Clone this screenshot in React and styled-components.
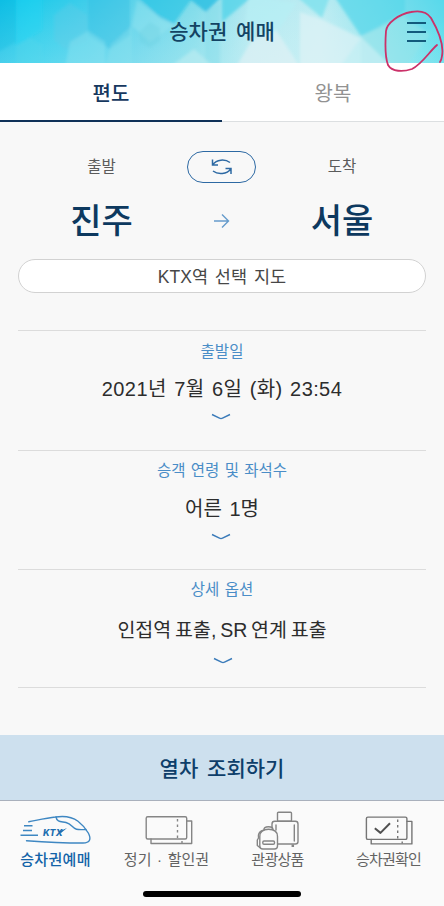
import React from "react";
import styled, { createGlobalStyle } from "styled-components";

const Global = createGlobalStyle`
  * { box-sizing: border-box; }
  body { margin: 0; background: #f8f8f8; }
  button { font: inherit; background: none; border: 0; padding: 0; margin: 0; }
`;

const Screen = styled.div`
  position: relative;
  display: flex;
  flex-direction: column;
  width: 444px;
  height: 906px;
  overflow: hidden;
  background: #f8f8f8;
  font-family: "Liberation Sans", "Noto Sans CJK KR", sans-serif;
`;

const Text = styled.span`
  display: block;
  white-space: nowrap;
  font-size: ${(p) => p.$size}px;
  line-height: ${(p) => p.$line}px;
  font-weight: ${(p) => p.$weight || 400};
  color: ${(p) => p.$color};
  letter-spacing: ${(p) => p.$track || 0}px;
  word-spacing: ${(p) => p.$gap || 0}px;
`;

const Header = styled.header`
  position: relative;
  display: grid;
  grid-template-columns: 60px 1fr 60px;
  align-items: center;
  justify-items: center;
  height: 63px;
`;

const HeaderArt = styled.svg`
  position: absolute;
  inset: 0;
`;

const HeaderTitle = styled.h1`
  position: relative;
  grid-column: 2;
  margin: 0;
`;

const MenuButton = styled.button`
  position: relative;
  grid-column: 3;
  display: flex;
  flex-direction: column;
  gap: 7px;
  margin: 1px 0 0 5px;
`;

const MenuBar = styled.span`
  width: 19px;
  height: 2px;
  background: #125a7c;
`;

const Tabs = styled.nav`
  display: grid;
  grid-template-columns: 1fr 1fr;
  height: 59px;
  background: #fff;
`;

const Tab = styled.button`
  display: flex;
  justify-content: center;
  padding-top: 16px;
  border-bottom: ${(p) => (p.$active ? "2px solid #0f3158" : "1px solid #dcdfe1")};
`;

const Main = styled.main`
  display: flex;
  flex-direction: column;
  height: 613px;
  padding: 28px 18px 0;
`;

const Route = styled.section`
  display: grid;
  grid-template-columns: 167px 1fr 168px;
  grid-template-rows: 33px 76px;
  justify-items: center;
  align-items: center;
`;

const SwapButton = styled.button`
  display: flex;
  align-items: center;
  justify-content: center;
  width: 69px;
  height: 32px;
  border: 1.5px solid #2d69a3;
  border-radius: 16px;
`;

const MapButton = styled.button`
  display: flex;
  align-items: center;
  justify-content: center;
  height: 34px;
  padding-top: 1px;
  background: #fff;
  border: 1px solid #d2d2d2;
  border-radius: 17px;
`;

const Options = styled.section`
  margin-top: 37px;
  border-bottom: 1px solid #dcdcdc;
`;

const Option = styled.div`
  display: flex;
  flex-direction: column;
  align-items: center;
  height: ${(p) => p.$height}px;
  padding-top: ${(p) => p.$top}px;
  border-top: 1px solid #dcdcdc;
`;

const OptionValue = styled.div`
  margin-top: ${(p) => p.$top}px;
`;

const Chevron = styled.svg`
  margin-top: ${(p) => p.$top}px;
  margin-left: ${(p) => p.$shift || 0}px;
`;

const SearchButton = styled.button`
  display: flex;
  align-items: center;
  justify-content: center;
  height: 66px;
  padding-top: 2px;
  background: #cde0ee;
  border-bottom: 1px solid #a9b0bc;
`;

const BottomNav = styled.nav`
  display: grid;
  grid-template-columns: repeat(4, 111px);
  height: 105px;
  background: #fafafa;
`;

const NavItem = styled.div`
  display: flex;
  flex-direction: column;
  align-items: center;
  padding-top: 7px;
`;

const HomeIndicator = styled.div`
  position: absolute;
  left: 143px;
  bottom: 9px;
  width: 158px;
  height: 6px;
  border-radius: 3px;
  background: #000;
`;

const Scribble = styled.svg`
  position: absolute;
  top: 0;
  right: 0;
  pointer-events: none;
`;

const NavIcon = ({ color, children }) => (
  <svg width="76" height="42" viewBox="0 0 76 42" fill="none" stroke={color} strokeWidth="1.4" strokeLinecap="round" strokeLinejoin="round">
    {children}
  </svg>
);

const Down = (props) => (
  <Chevron width="20" height="8" viewBox="0 0 20 8" fill="none" stroke="#3c7cba" strokeWidth="1.4" {...props}>
    <path d="M1 1.5 L8.5 5.2 Q10 6 11.5 5.2 L19 1.5" />
  </Chevron>
);

const Facets = () => (
  <HeaderArt width="444" height="63" viewBox="0 0 444 63" preserveAspectRatio="none">
    <defs>
      <linearGradient id="sky" x1="0" x2="1" y1="0" y2="0">
        <stop offset="0" stopColor="#12c0e6" />
        <stop offset=".07" stopColor="#1fcbea" />
        <stop offset=".2" stopColor="#3fcdea" />
        <stop offset=".32" stopColor="#62d4ea" />
        <stop offset=".44" stopColor="#80dcea" />
        <stop offset=".56" stopColor="#b0e8f0" />
        <stop offset=".72" stopColor="#bdecf2" />
        <stop offset=".86" stopColor="#8fe3ed" />
        <stop offset="1" stopColor="#4cdaea" />
      </linearGradient>
      <linearGradient id="haze" x1="0" x2="0" y1="0" y2="1">
        <stop offset="0" stopColor="#fff" stopOpacity="0" />
        <stop offset="1" stopColor="#e6fafa" stopOpacity=".25" />
      </linearGradient>
      <filter id="soft"><feGaussianBlur stdDeviation="1.6" /></filter>
    </defs>
    <rect width="444" height="63" fill="url(#sky)" />
    <rect width="444" height="63" fill="url(#haze)" />
    <g filter="url(#soft)">
      <path d="M-4 -4H16V42L-4 53Z" fill="#10b6df" opacity=".25" />
      <path d="M16 -4H42V30L16 46Z" fill="#1bd8f5" opacity=".35" />
      <path d="M16 46L30 38L42 45V67H16Z" fill="#54d6ec" opacity=".35" />
      <path d="M54 15L70 3L87 15V40L66 50L54 40Z" fill="#60cce5" opacity=".35" />
      <path d="M88 -4H130V35L110 49L88 35Z" fill="#34bee3" opacity=".45" />
      <path d="M88 31L70 42L65 67H105V42Z" fill="#8be2ef" opacity=".45" />
      <path d="M111 45L132 26V67H105Z" fill="#87e0ee" opacity=".45" />
      <path d="M137 -4H194L174 24L160 18Z" fill="#16bfe3" opacity=".55" />
      <path d="M137 0L155 14L174 25L150 42L132 26Z" fill="#9ae5f0" opacity=".4" />
      <path d="M139 32L150 22L160 28V41L150 48L140 42Z" fill="#68ccdf" opacity=".3" />
      <path d="M186 -4H222L206 12Z" fill="#20bce1" opacity=".75" />
      <path d="M205 12L220 3V67H205Z" fill="#82dbe9" opacity=".4" />
      <path d="M194 49L214 67H170Z" fill="#b9ebf1" opacity=".7" />
      <path d="M222 -4H253L222 22Z" fill="#48d1e8" opacity=".7" />
      <path d="M249 -4L297 3L270 42L245 25Z" fill="#b7eff5" opacity=".7" />
      <path d="M236 67L252 40L276 30L300 67Z" fill="#e4f2f5" opacity=".6" />
      <path d="M296 -4H330L322 18Z" fill="#74dfed" opacity=".7" />
      <path d="M300 12L323 20L361 38L340 67H300Z" fill="#e0f2f6" opacity=".65" />
      <path d="M334 -4H405V16L361 36Z" fill="#51d6e9" opacity=".7" />
      <path d="M361 37L405 12L430 35L405 67H361Z" fill="#91e2ea" opacity=".6" />
      <path d="M361 37L392 67H340Z" fill="#d1f1f5" opacity=".6" />
      <path d="M405 -4H448V18L426 32L405 18Z" fill="#64d8ea" opacity=".45" />
    </g>
  </HeaderArt>
);

const TicketShape = ({ children }) => (
  <>
    <rect x="17.2" y="8.7" width="40.5" height="22.3" rx="1.5" />
    <path d="M58 13H62.7V35.5H22V31" />
    <path d="M48.5 11V30M53 33V35" strokeDasharray="2.5 3" strokeLinecap="butt" />
    {children}
  </>
);

const navItems = [
  {
    label: "승차권예매", color: "#1263a8", weight: 500, line: "#3e87c2", track: 0.3,
    icon: (
      <>
        <path d="M10.8 13.8C20 12 29 9.8 37.5 9C48 7.4 55 9.5 60 13.2C65 17 68 21 70.3 25C73.5 31 72 35 65 35C45 35 26 34 8.5 32.7" />
        <path d="M6 17.8H14.5M5 22.5H14M2.5 27.3H20" strokeLinecap="butt" />
        <path d="M38 9C39 14.5 43 13.5 48 14.5C54 16 54 20 58.5 21.2C61.5 22 65 21.5 68 21.5" />
        <text x="25" y="28" fontFamily="Inter, sans-serif" fontSize="9.2" fontWeight="800" fontStyle="italic" fill="#1d6eb0" stroke="none" textLength="19.5" lengthAdjust="spacingAndGlyphs">KTX</text>
        <path d="M40 24L49 20L43 25Z" fill="#1d6eb0" stroke="none" />
      </>
    ),
  },
  { label: "정기 · 할인권", color: "#636363", line: "#858585", track: 0, gap: 1.5, icon: <TicketShape /> },
  {
    label: "관광상품", color: "#636363", line: "#858585", track: -0.7,
    icon: (
      <>
        <rect x="37.5" y="4.3" width="14" height="9" rx="1" />
        <path d="M32 20V16Q32 13.3 34.7 13.3H55.3Q58 13.3 58 16V33.5Q58 36 55.5 36H38M36 17V22M54.3 17V33" />
        <path d="M52.8 36.5V39" strokeWidth="2.5" strokeLinecap="butt" />
        <path d="M19.8 38V28.5Q19.8 21.3 28.5 21.3Q37.5 21.3 37.5 28.5V38Q37.5 41 34.5 41H22.8Q19.8 41 19.8 38Z" />
        <path d="M24 22Q23.5 18.8 28.5 18.8Q33 18.8 33 21.5M22.5 22.5Q17.5 24.5 18.5 30L17.3 32V37.5L19.8 39.5" />
        <rect x="22.8" y="33" width="11.7" height="3.3" rx="1.2" />
      </>
    ),
  },
  {
    label: "승차권확인", color: "#636363", line: "#757575", track: -0.8,
    icon: (
      <g transform="translate(-1.8 .4)">
        <TicketShape><path d="M25.6 19.9L31.3 24.5L40.8 14.9" stroke="#505050" strokeWidth="2" strokeLinecap="butt" /></TicketShape>
      </g>
    ),
  },
];

export default function App() {
  return (
    <Screen>
      <Global />
      <Header>
        <Facets />
        <HeaderTitle>
          <Text $size={21} $line={30} $weight={500} $color="#134363" $gap={3}>승차권 예매</Text>
        </HeaderTitle>
        <MenuButton aria-label="메뉴"><MenuBar /><MenuBar /><MenuBar /></MenuButton>
      </Header>

      <Tabs>
        <Tab $active><Text $size={20} $line={30} $weight={500} $color="#16385f">편도</Text></Tab>
        <Tab><Text $size={20} $line={30} $color="#929292">왕복</Text></Tab>
      </Tabs>

      <Main>
        <Route>
          <Text $size={15.5} $line={24} $color="#5b5b5b">출발</Text>
          <SwapButton aria-label="출발 도착 바꾸기">
            <svg width="22" height="18" viewBox="0 0 22 18" fill="none" stroke="#2d69a3" strokeWidth="1.5">
              <path d="M1.5 1.5V7H7M1.8 6.8C5.5 1.2 14 .8 19 4.5M20 16V10.5H14.5M19.7 10.8C16 16.3 7 16.8 2 13" />
            </svg>
          </SwapButton>
          <Text $size={15.5} $line={24} $color="#5b5b5b">도착</Text>
          <Text $size={34} $line={50} $weight={500} $color="#0d395f">진주</Text>
          <svg width="16" height="16" viewBox="0 0 16 16" fill="none" stroke="#659bcb" strokeWidth="1.4">
            <path d="M0 8H14.5M8 1.5L14.5 8L8 14.5" />
          </svg>
          <Text $size={34} $line={50} $weight={500} $color="#0d395f">서울</Text>
        </Route>

        <MapButton><Text $size={17.5} $line={26} $color="#474747" $gap={2}>KTX역 선택 지도</Text></MapButton>

        <Options>
          <Option $height={120} $top={9}>
            <Text $size={15.5} $line={24} $color="#4a8dc7">출발일</Text>
            <OptionValue $top={10}><Text $size={20} $line={30} $color="#2d2d2d" $gap={1.5} $track={0.4}>2021년 7월 6일 (화) 23:54</Text></OptionValue>
            <Down $top={9} $shift={-2} />
          </Option>
          <Option $height={119} $top={8}>
            <Text $size={15.5} $line={24} $color="#4a8dc7" $gap={1}>승객 연령 및 좌석수</Text>
            <OptionValue $top={11}><Text $size={20} $line={30} $color="#2d2d2d" $gap={2}>어른 1명</Text></OptionValue>
            <Down $top={9} $shift={-2} />
          </Option>
          <Option $height={118} $top={8}>
            <Text $size={15.5} $line={24} $color="#4a8dc7" $gap={1}>상세 옵션</Text>
            <OptionValue $top={13}><Text $size={19.5} $line={30} $color="#2d2d2d" $gap={-1.6}>인접역 표출, SR 연계 표출</Text></OptionValue>
            <Down $top={12} $shift={2} />
          </Option>
        </Options>
      </Main>

      <SearchButton><Text $size={21} $line={30} $weight={500} $color="#0e3e6a" $gap={3}>열차 조회하기</Text></SearchButton>

      <BottomNav>
        {navItems.map((item) => (
          <NavItem key={item.label}>
            <NavIcon color={item.line}>{item.icon}</NavIcon>
            <Text $size={15} $line={20} $weight={item.weight} $color={item.color} $track={item.track} $gap={item.gap}>{item.label}</Text>
          </NavItem>
        ))}
      </BottomNav>
      <HomeIndicator />

      <Scribble width="60" height="76" viewBox="0 0 60 76" fill="none" stroke="#cb3169" strokeWidth="1.8" strokeLinecap="round">
        <path d="M53 45C45 52 38 64 28 69C19 72 8 72 4 65C1 57 1 45 2 31C3 23 15 14 27 12C37 10 43 12 47 18C54 30 60 45 58 56Q57.5 60 56 62" />
      </Scribble>
    </Screen>
  );
}
